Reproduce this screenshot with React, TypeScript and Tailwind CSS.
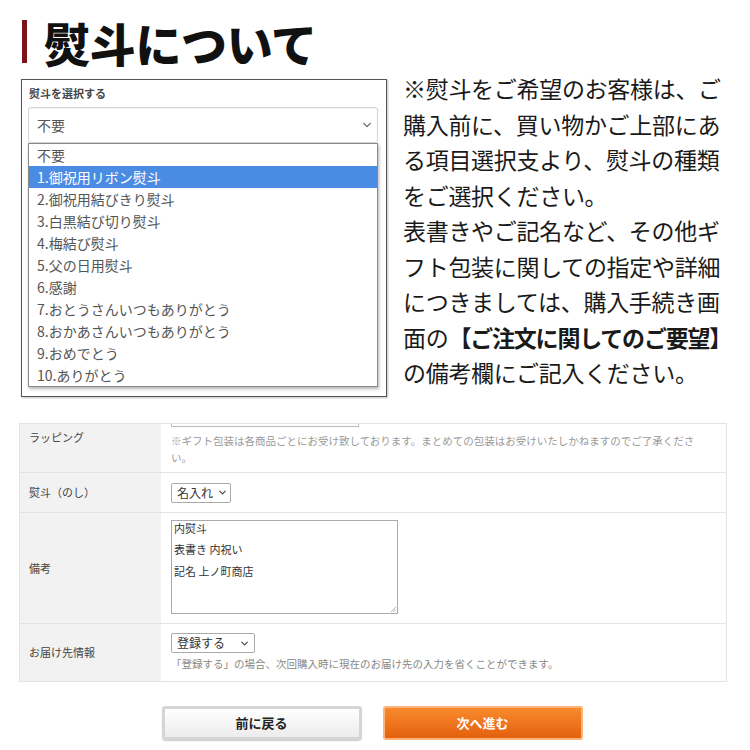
import React from "react";

const jp = { fontFamily: '"Noto Sans CJK JP", "Noto Sans", sans-serif' };

function Chevron({ className = "" }: { className?: string }) {
  return (
    <svg viewBox="0 0 10 6" className={className} fill="none" stroke="currentColor" strokeWidth="1.6" strokeLinecap="round" strokeLinejoin="round">
      <path d="M1 1l4 4 4-4" />
    </svg>
  );
}

const options = [
  "不要",
  "1.御祝用リボン熨斗",
  "2.御祝用結びきり熨斗",
  "3.白黒結び切り熨斗",
  "4.梅結び熨斗",
  "5.父の日用熨斗",
  "6.感謝",
  "7.おとうさんいつもありがとう",
  "8.おかあさんいつもありがとう",
  "9.おめでとう",
  "10.ありがとう",
];

const rightLines: React.ReactNode[] = [
  "※熨斗をご希望のお客様は、ご",
  "購入前に、買い物かご上部にあ",
  "る項目選択支より、熨斗の種類",
  "をご選択ください。",
  "表書きやご記名など、その他ギ",
  "フト包装に関しての指定や詳細",
  "につきましては、購入手続き画",
  <>
    面の<span className="font-bold tracking-[-1.2px]">【ご注文に関してのご要望】</span>
  </>,
  "の備考欄にご記入ください。",
];

export default function App() {
  return (
    <div className="w-[750px] h-[750px] bg-white overflow-hidden text-[#333]" style={jp}>
      {/* Title */}
      <div className="flex items-center pl-[22px] pt-[19px] h-[64px]">
        <div className="w-[5px] h-[43px] bg-[#7a1418]" />
        <div className="ml-[17px] text-[46px] leading-[46px] font-black tracking-[-0.3px] text-[#111]">熨斗について</div>
      </div>

      {/* Upper section */}
      <div className="flex items-start pl-[21px] mt-[15px]">
        <div className="w-[366px] h-[318px] border border-[#555] bg-white shadow-[1px_1px_2px_rgba(0,0,0,0.25)] pl-[6px] pr-[8px] pt-[6px]">
          <div className="text-[11px] leading-[15px] font-bold text-[#444] pl-[1px]">熨斗を選択する</div>
          <div className="mt-[6px] h-[36px] border border-[#d4d4d4] rounded-[3px] flex items-center justify-between pl-[8px] pr-[6px] text-[14px] text-[#555] shadow-[inset_0_1px_1px_rgba(0,0,0,0.05)]">
            <span>不要</span>
            <Chevron className="w-[8px] h-[6px] text-[#666]" />
          </div>
          <div className="border border-[#888] bg-white shadow-[1px_2px_3px_rgba(0,0,0,0.3)]">
            {options.map((o, i) => (
              <div
                key={o}
                className={
                  "h-[22px] leading-[22px] pl-[8px] text-[14px] whitespace-nowrap " +
                  (i === 1 ? "bg-[#4a8be3] text-white" : "text-[#555]")
                }
              >
                {o}
              </div>
            ))}
          </div>
        </div>
        <div className="ml-[16px] -mt-[8px] text-[23px] leading-[35.5px] text-[#1a1a1a] tracking-[-0.3px]">
          {rightLines.map((l, i) => (
            <div key={i} className="whitespace-nowrap">
              {l}
            </div>
          ))}
        </div>
      </div>

      {/* Table */}
      <div className="ml-[19px] mt-[26px] w-[708px] border border-[#e4e4e4] text-[11px]">
        {/* Wrapping */}
        <div className="flex h-[49px] border-b border-[#e4e4e4]">
          <div className="w-[141px] bg-[#f2f2f2] pl-[9px] pt-[5px] text-[#444]">ラッピング</div>
          <div className="flex-1 pl-[10px]">
            <div className="w-[188px] h-[3px] border-b border-x border-[#bbb]" />
            <div className="mt-[5px] text-[10.5px] leading-[17px] text-[#999] pr-[20px]">
              ※ギフト包装は各商品ごとにお受け致しております。まとめての包装はお受けいたしかねますのでご了承くださ
              <br />
              い。
            </div>
          </div>
        </div>
        {/* Noshi */}
        <div className="flex h-[40px] border-b border-[#e4e4e4]">
          <div className="w-[141px] bg-[#f2f2f2] pl-[9px] flex items-center text-[#444]">熨斗（のし）</div>
          <div className="flex-1 pl-[10px] flex items-center">
            <div className="h-[20px] w-[60px] border border-[#aaa] rounded-[2px] flex items-center justify-between pl-[5px] pr-[4px] text-[12px] text-[#333]">
              <span>名入れ</span>
              <Chevron className="w-[7px] h-[5px] text-[#444]" />
            </div>
          </div>
        </div>
        {/* Remarks */}
        <div className="flex h-[111px] border-b border-[#e4e4e4]">
          <div className="w-[141px] bg-[#f2f2f2] pl-[9px] flex items-center text-[#444]">備考</div>
          <div className="flex-1 pl-[10px] pt-[7px]">
            <div className="relative w-[227px] h-[94px] border border-[#aaa] pl-[2px] pt-[1px] text-[11px] leading-[22px] text-[#333]">
              <div className="leading-[12px]">内熨斗</div>
              <div className="mt-[4px]">表書き 内祝い</div>
              <div>記名 上ノ町商店</div>
              <svg viewBox="0 0 6 6" className="absolute right-[1px] bottom-[1px] w-[6px] h-[6px]" stroke="#999" strokeWidth="0.8">
                <path d="M1 6L6 1M3.5 6L6 3.5" />
              </svg>
            </div>
          </div>
        </div>
        {/* Delivery */}
        <div className="flex h-[57px]">
          <div className="w-[141px] bg-[#f2f2f2] pl-[9px] flex items-center text-[#444]">お届け先情報</div>
          <div className="flex-1 pl-[10px] pt-[9px]">
            <div className="h-[20px] w-[84px] border border-[#aaa] rounded-[2px] flex items-center justify-between pl-[5px] pr-[6px] text-[12px] text-[#333]">
              <span>登録する</span>
              <Chevron className="w-[7px] h-[5px] text-[#444]" />
            </div>
            <div className="mt-[4px] text-[10.5px] leading-[14px] text-[#888]">
              「登録する」の場合、次回購入時に現在のお届け先の入力を省くことができます。
            </div>
          </div>
        </div>
      </div>

      {/* Buttons */}
      <div className="flex justify-center gap-[21px] mt-[24px] pr-[6px]">
        <div className="w-[200px] h-[34px] rounded-[3px] border-[3px] border-[#d5d5d5] bg-gradient-to-b from-white to-[#ececec] flex items-center justify-center text-[13px] font-bold text-[#222] shadow-[0_1px_1px_rgba(0,0,0,0.2)]">
          前に戻る
        </div>
        <div className="w-[200px] h-[34px] rounded-[3px] border-[2px] border-[#fbb57a] bg-gradient-to-b from-[#f88a2c] to-[#e4600c] flex items-center justify-center text-[13px] font-bold text-white">
          次へ進む
        </div>
      </div>
    </div>
  );
}
